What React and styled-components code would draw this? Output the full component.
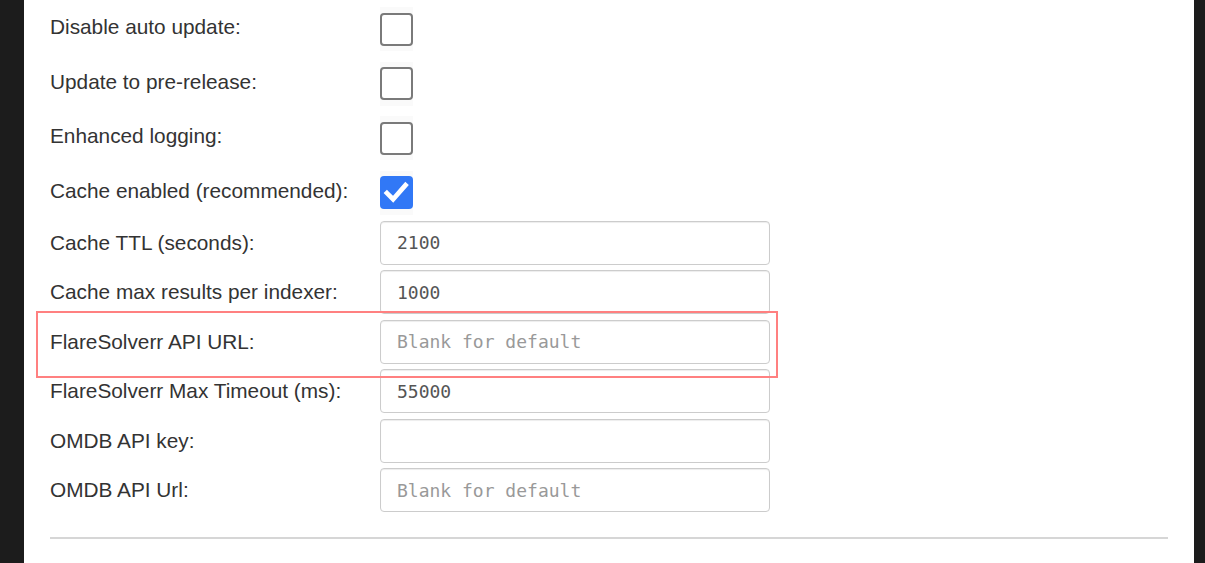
import styled, { createGlobalStyle } from "styled-components";

const Global = createGlobalStyle`
  html, body {
    margin: 0;
    padding: 0;
    background: #1c1c1c;
    overflow: hidden;
  }
  body {
    font-family: "Liberation Sans", Arial, sans-serif;
  }
`;

const Page = styled.div`
  height: 563px;
  padding-left: 24px;
  width: 1170px;
`;

const Panel = styled.div`
  position: relative;
  background: #fff;
  height: 563px;
  padding: 2px 26px 0 26px;
  box-sizing: border-box;
`;

const Row = styled.div`
  display: flex;
  align-items: center;
  height: ${(p) => p.h}px;
`;

const Label = styled.label`
  width: 330px;
  flex: none;
  font-size: 20.8px;
  color: #333;
  padding-bottom: ${(p) => (p.lift ? 4 : 0)}px;
`;

const CheckCell = styled.div`
  display: flex;
  align-items: center;
  justify-content: center;
  width: 33px;
  height: 44px;
  background: #fafafa;
`;

const Check = styled.span`
  display: flex;
  align-items: center;
  justify-content: center;
  width: 33px;
  height: 33px;
  box-sizing: border-box;
  border-radius: 4px;
  background: ${(p) => (p.on ? "#3178f6" : "#fff")};
  border: ${(p) => (p.on ? "none" : "2px solid #7a7a7a")};
`;

const Field = styled.input`
  width: 390px;
  height: 44px;
  box-sizing: border-box;
  border: 1px solid #ccc;
  border-radius: 4px;
  padding: 0 16px;
  font-family: "DejaVu Sans Mono", monospace;
  font-size: 18px;
  color: #555;
  background: #fff;
  box-shadow: inset 0 1px 1px rgba(0, 0, 0, 0.075);
  outline: none;
  &::placeholder {
    color: #999;
  }
`;

const Inputs = styled.div`
  margin-top: -2px;
`;

const Rule = styled.hr`
  margin: 22px 0 0 0;
  border: none;
  border-top: 2px solid #d6d6d6;
`;

const Highlight = styled.div`
  position: absolute;
  left: 12px;
  top: 311px;
  width: 742px;
  height: 67px;
  box-sizing: border-box;
  border: 2px solid #ff8080;
  pointer-events: none;
`;

const checks = [
  ["Disable auto update:", false],
  ["Update to pre-release:", false],
  ["Enhanced logging:", false],
  ["Cache enabled (recommended):", true],
];

const fields = [
  ["Cache TTL (seconds):", "2100", ""],
  ["Cache max results per indexer:", "1000", ""],
  ["FlareSolverr API URL:", "", "Blank for default"],
  ["FlareSolverr Max Timeout (ms):", "55000", ""],
  ["OMDB API key:", "", ""],
  ["OMDB API Url:", "", "Blank for default"],
];

function Tick() {
  return (
    <svg width="27" height="27" viewBox="0 0 24 24">
      <path
        d="M3.5 12.5 L9 18 L20 5.5"
        fill="none"
        stroke="#fff"
        strokeWidth="4.2"
        strokeLinecap="square"
      />
    </svg>
  );
}

function App() {
  return (
    <Page>
      <Global />
      <Panel>
        {checks.map(([label, on]) => (
          <Row h={54.5} key={label}>
            <Label lift={1}>{label}</Label>
            <CheckCell>
              <Check on={on ? 1 : 0}>{on && <Tick />}</Check>
            </CheckCell>
          </Row>
        ))}
        <Inputs>
          {fields.map(([label, value, ph]) => (
            <Row h={49.5} key={label}>
              <Label>{label}</Label>
              <Field defaultValue={value} placeholder={ph} />
            </Row>
          ))}
        </Inputs>
        <Rule />
        <Highlight />
      </Panel>
    </Page>
  );
}

export default App;
